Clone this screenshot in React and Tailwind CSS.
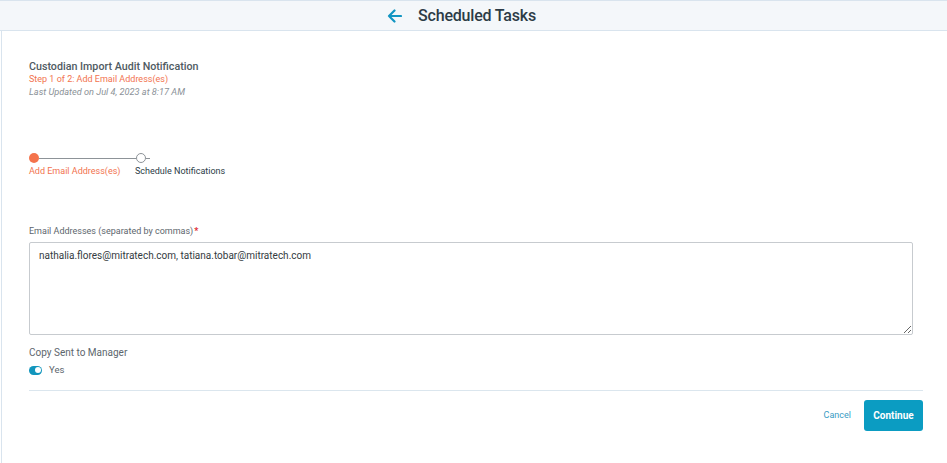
import React from 'react';

const App = () => {
    return (
        <div className="w-[947px] h-[463px] bg-white flex flex-col overflow-hidden" style={{ fontFamily: 'Roboto, "Liberation Sans", sans-serif' }}>
            {/* top bar */}
            <header className="h-[31px] shrink-0 bg-[#f4f7fa] border-t border-b border-[#d9e4ee] flex items-center justify-center gap-[16px] pr-[24px]">
                <svg width="15" height="14" viewBox="0 0 15 14" className="mt-[1px]">
                    <path d="M14 7H2M7.5 1.5L2 7l5.5 5.5" fill="none" stroke="#1295c2" strokeWidth="2.2" strokeLinecap="round" strokeLinejoin="round" />
                </svg>
                <h1 className="text-[16px] font-medium text-[#2c3b46] tracking-[-0.2px]">Scheduled Tasks</h1>
            </header>

            <main className="flex-1 border-l border-[#d9e4ee] ml-[1px] pl-[27px] pr-[25px] pt-[28px]">
                <div className="flex flex-col">
                    <h2 className="text-[10.7px] leading-[15px] font-medium text-[#4f5a62]">Custodian Import Audit Notification</h2>
                    <p className="text-[9px] leading-[11px] text-[#f2734f]">Step 1 of 2: Add Email Address(es)</p>
                    <p className="text-[9.2px] leading-[13px] italic text-[#8b9298]">Last Updated on Jul 4, 2023 at 8:17 AM</p>
                </div>

                {/* stepper */}
                <div className="mt-[55px] flex">
                    <div className="flex flex-col">
                        <div className="flex items-center h-[10px]">
                            <span className="w-[10px] h-[10px] rounded-full bg-[#f4734c]" />
                            <span className="w-[97px] h-[1px] bg-[#8d9398]" />
                        </div>
                        <span className="mt-[2px] text-[9px] leading-[12px] text-[#f2734f]">Add Email Address(es)</span>
                    </div>
                    <div className="flex flex-col -ml-[107px] pl-[107px]">
                        <div className="flex items-center h-[10px]">
                            <span className="w-[10px] h-[10px] rounded-full border border-[#8d9398] bg-white" />
                            <span className="w-[4px] h-[1px] bg-[#8d9398]" />
                        </div>
                    </div>
                    <span className="mt-[12px] ml-[-15px] text-[9px] leading-[12px] text-[#2c3b46]">Schedule Notifications</span>
                </div>

                {/* email field */}
                <div className="mt-[48px]">
                    <label className="block text-[9px] leading-[12px] text-[#5d666d] mb-[5px]">
                        Email Addresses (separated by commas)<span className="ml-[1px] text-[#e0282e] font-bold">*</span>
                    </label>
                    <textarea
                        className="block w-[884px] h-[93px] border border-[#c7cbcf] rounded-[2px] px-[9px] pt-[6px] text-[10px] leading-[14px] text-[#333b41] outline-none resize-y"
                        defaultValue="nathalia.flores@mitratech.com, tatiana.tobar@mitratech.com"
                    />
                </div>

                <div className="mt-[12px]">
                    <p className="text-[10px] leading-[12px] text-[#5d666d]">Copy Sent to Manager</p>
                    <div className="mt-[5px] flex items-center gap-[7px]">
                        <span className="w-[13px] h-[9px] rounded-full bg-[#1296bd] flex items-center justify-end pr-[1px]">
                            <span className="w-[6px] h-[6px] rounded-full bg-white" />
                        </span>
                        <span className="text-[9.5px] leading-[12px] text-[#5d666d]">Yes</span>
                    </div>
                </div>

                <div className="mt-[14px] border-t border-[#dbe6ee] w-[894px]" />

                <div className="mt-[9px] flex justify-end items-center gap-[13px] w-[894px]">
                    <button className="text-[9px] text-[#3a9cc4]">Cancel</button>
                    <button className="w-[59px] h-[31px] rounded-[3px] bg-[#0b9cc2] text-white text-[10px] font-bold">Continue</button>
                </div>
            </main>
        </div>
    );
};

export default App;
